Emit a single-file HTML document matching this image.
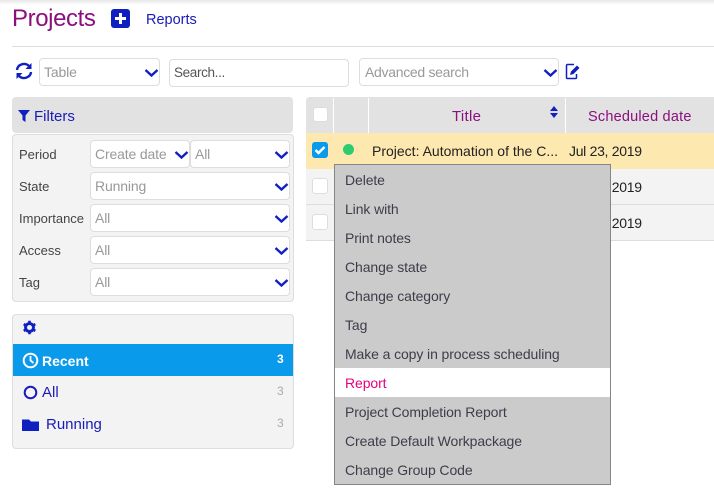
<!DOCTYPE html>
<html><head><meta charset="utf-8"><style>
html,body{margin:0;padding:0;background:#fff;width:714px;height:493px;overflow:hidden}
body{position:relative;font-family:"Liberation Sans",sans-serif;font-size:14px;color:#333}
.a{position:absolute;white-space:nowrap}
.box{position:absolute;box-sizing:border-box;background:#fff;border:1px solid #ddd;border-radius:4px;color:#999;font-size:14px;line-height:26px;padding-left:4px;height:28px;letter-spacing:-.15px}
.box svg{position:absolute;right:0;top:9px}
.lab{position:absolute;left:19px;font-size:13px;color:#444;line-height:20px}
.m{position:absolute;left:0;right:0;height:29px;line-height:29px;padding-left:10px;color:#3d3d4a;font-size:14px;letter-spacing:-.1px}
.cb{position:absolute;box-sizing:border-box;left:312px;width:16px;height:16px;background:#fff;border:1px solid #ddd;border-radius:3px}
</style></head><body>
<div class="a" style="left:0;top:0;width:714px;height:5px;background:linear-gradient(#e8e8e8,#fff)"></div>
<div class="a" style="left:12px;top:3px;font-size:24px;line-height:32px;color:#8b0f7f;letter-spacing:-.4px">Projects</div>
<div class="a" style="left:111px;top:9px;width:19px;height:19px;background:#1020c0;border-radius:3px"></div>
<div class="a" style="left:115px;top:17px;width:11px;height:3px;background:#fff"></div>
<div class="a" style="left:119px;top:13px;width:3px;height:11px;background:#fff"></div>
<div class="a" style="left:146px;top:10px;font-size:14.5px;line-height:20px;color:#1a1ab8">Reports</div>
<div class="a" style="left:12px;top:46px;width:702px;height:1px;background:#ddd"></div>

<svg class="a" style="left:15px;top:62px" width="18" height="18" viewBox="0 0 18 18" fill="none" stroke="#1020c0" stroke-width="2.4"><path d="M2 8A7 6.5 0 0 1 14 4"/><path d="M16 10A7 6.5 0 0 1 4 14"/><path d="M16.500 1v6h-6z" fill="#1020c0" stroke="none"/><path d="M1.500 17v-6h6z" fill="#1020c0" stroke="none"/></svg>
<div class="box" style="left:39px;top:58px;width:121px">Table<svg width="15" height="9" viewBox="0 0 15 9"><path d="M1.500 2l6 5.500 6-5.500" fill="none" stroke="#1020c0" stroke-width="2.400"/></svg></div>
<div class="box" style="left:169px;top:59px;width:180px;color:#555;font-size:13.500px;letter-spacing:-.35px">Search...</div>
<div class="box" style="left:359px;top:58px;width:200px;padding-left:5px;letter-spacing:-.3px">Advanced search<svg width="15" height="9" viewBox="0 0 15 9"><path d="M1.500 2l6 5.500 6-5.500" fill="none" stroke="#1020c0" stroke-width="2.400"/></svg></div>
<svg class="a" style="left:565px;top:63px" width="16" height="17" viewBox="0 0 16 17" fill="none"><path d="M9 1.500H2.500a1 1 0 0 0-1 1v12a1 1 0 0 0 1 1h8a1 1 0 0 0 1-1V11" stroke="#1020c0" stroke-width="1.500"/><path d="M5 12l1-3.500L12 2.500l2.500 2.500-6 6z" fill="#1020c0"/></svg>

<div class="a" style="left:12px;top:97px;width:281px;height:36px;background:#e2e2e2;border-radius:4px"></div>
<svg class="a" style="left:18px;top:110px" width="12" height="12" viewBox="0 0 12 12"><path d="M0 0h12L7.500 5.500V12L4.500 10V5.500z" fill="#1020c0"/></svg>
<div class="a" style="left:34px;top:107px;font-size:15px;line-height:20px;color:#1a1ab8">Filters</div>

<div class="a" style="left:12px;top:134px;width:282px;height:168px;box-sizing:border-box;background:#f3f3f3;border:1px solid #ddd;border-radius:4px"></div>
<div class="lab" style="top:145px">Period</div>
<div class="box" style="left:90px;top:140px;width:100px">Create date<svg width="15" height="9" viewBox="0 0 15 9"><path d="M1.500 2l6 5.500 6-5.500" fill="none" stroke="#1020c0" stroke-width="2.400"/></svg></div>
<div class="box" style="left:190px;top:140px;width:100px">All<svg width="15" height="9" viewBox="0 0 15 9"><path d="M1.500 2l6 5.500 6-5.500" fill="none" stroke="#1020c0" stroke-width="2.400"/></svg></div>
<div class="lab" style="top:177px">State</div>
<div class="box" style="left:90px;top:172px;width:200px">Running<svg width="15" height="9" viewBox="0 0 15 9"><path d="M1.500 2l6 5.500 6-5.500" fill="none" stroke="#1020c0" stroke-width="2.400"/></svg></div>
<div class="lab" style="top:209px">Importance</div>
<div class="box" style="left:90px;top:204px;width:200px">All<svg width="15" height="9" viewBox="0 0 15 9"><path d="M1.500 2l6 5.500 6-5.500" fill="none" stroke="#1020c0" stroke-width="2.400"/></svg></div>
<div class="lab" style="top:241px">Access</div>
<div class="box" style="left:90px;top:236px;width:200px">All<svg width="15" height="9" viewBox="0 0 15 9"><path d="M1.500 2l6 5.500 6-5.500" fill="none" stroke="#1020c0" stroke-width="2.400"/></svg></div>
<div class="lab" style="top:273px">Tag</div>
<div class="box" style="left:90px;top:268px;width:200px">All<svg width="15" height="9" viewBox="0 0 15 9"><path d="M1.500 2l6 5.500 6-5.500" fill="none" stroke="#1020c0" stroke-width="2.400"/></svg></div>

<div class="a" style="left:12px;top:314px;width:282px;height:135px;box-sizing:border-box;background:#f3f3f3;border:1px solid #ddd;border-radius:4px"></div>
<svg class="a" style="left:22px;top:320px" width="15" height="15" viewBox="0 0 15 15"><path d="M7.500 .8v13.400M1.700 4.150l11.600 6.700M1.700 10.850l11.600-6.700" stroke="#1020c0" stroke-width="2.600"/><circle cx="7.500" cy="7.500" r="4.100" fill="none" stroke="#1020c0" stroke-width="2.600"/><circle cx="7.500" cy="7.500" r="2.500" fill="#f3f3f3"/></svg>
<div class="a" style="left:13px;top:344px;width:280px;height:32px;background:#0a9aec"></div>
<svg class="a" style="left:22px;top:352px" width="17" height="17" viewBox="0 0 17 17" fill="none" stroke="#fff"><circle cx="8.500" cy="8.500" r="6.800" stroke-width="2"/><path d="M8.500 4v4.500l3 2.500" stroke-width="1.800"/></svg>
<div class="a" style="left:42px;top:351px;font-size:14px;font-weight:bold;line-height:20px;color:#fff">Recent</div>
<div class="a" style="left:277px;top:351px;font-size:12px;font-weight:bold;line-height:16px;color:#fff">3</div>
<svg class="a" style="left:23px;top:385px" width="15" height="15" viewBox="0 0 15 15" fill="none"><circle cx="7.500" cy="7.500" r="5.800" stroke="#1a1ab8" stroke-width="2"/></svg>
<div class="a" style="left:42px;top:383px;font-size:15px;line-height:20px;color:#1a1ab8">All</div>
<div class="a" style="left:277px;top:383px;font-size:12px;line-height:16px;color:#aaa">3</div>
<svg class="a" style="left:22px;top:418px" width="17" height="13" viewBox="0 0 17 13"><path d="M0 1.500h7l2 2h8V13H0z" fill="#1020c0"/></svg>
<div class="a" style="left:46px;top:415px;font-size:15px;line-height:20px;color:#1a1ab8">Running</div>
<div class="a" style="left:277px;top:415px;font-size:12px;line-height:16px;color:#aaa">3</div>

<div class="a" style="left:306px;top:97px;width:408px;height:36px;background:#e2e2e2;border-radius:4px 0 0 0"></div>
<div class="a" style="left:333px;top:98px;width:1px;height:35px;background:#fff"></div>
<div class="a" style="left:368px;top:98px;width:1px;height:35px;background:#fff"></div>
<div class="a" style="left:565px;top:98px;width:1px;height:35px;background:#fff"></div>
<div class="cb" style="top:107px;left:313px;width:15px;height:15px"></div>
<div class="a" style="left:452px;top:107px;font-size:15px;line-height:20px;color:#8b0f7f;letter-spacing:.3px">Title</div>
<svg class="a" style="left:549px;top:105px" width="10" height="14" viewBox="0 0 10 14"><path d="M5 1l4 5H1zM1 8h8l-4 5z" fill="#1020c0"/></svg>
<div class="a" style="left:588px;top:107px;font-size:14.500px;line-height:20px;color:#8b0f7f;letter-spacing:.2px">Scheduled date</div>

<div class="a" style="left:306px;top:133px;width:408px;height:36px;background:#fde8b0"></div>
<div class="a" style="left:306px;top:169px;width:408px;height:35px;background:#f3f3f3;border-bottom:1px solid #ddd"></div>
<div class="a" style="left:306px;top:205px;width:408px;height:35px;background:#f3f3f3;border-bottom:1px solid #ddd"></div>
<div class="a" style="left:312px;top:142px;width:16px;height:16px;background:#0a9aec;border-radius:3px"></div>
<svg class="a" style="left:312px;top:142px" width="16" height="16" viewBox="0 0 16 16"><path d="M3.500 8l3 3 6-6" fill="none" stroke="#fff" stroke-width="2.400"/></svg>
<div class="a" style="left:343px;top:144px;width:11px;height:11px;border-radius:50%;background:#2ecc71"></div>
<div class="a" style="left:372px;top:141px;font-size:14px;line-height:20px;color:#222">Project: Automation of the C...</div>
<div class="a" style="left:569px;top:141px;font-size:14px;line-height:20px;color:#222;letter-spacing:-.3px">Jul 23, 2019</div>
<div class="a" style="left:569px;top:177px;font-size:14px;line-height:20px;color:#222;letter-spacing:-.3px">Jul 23, 2019</div>
<div class="a" style="left:569px;top:213px;font-size:14px;line-height:20px;color:#222;letter-spacing:-.3px">Jul 23, 2019</div>
<div class="cb" style="top:178px"></div>
<div class="cb" style="top:214px"></div>

<div class="a" style="left:334px;top:164px;width:277px;height:321px;box-sizing:border-box;background:#cbcbcb;border:1px solid #858585">
<div class="m" style="top:1px">Delete</div>
<div class="m" style="top:30px">Link with</div>
<div class="m" style="top:59px">Print notes</div>
<div class="m" style="top:88px">Change state</div>
<div class="m" style="top:117px">Change category</div>
<div class="m" style="top:146px">Tag</div>
<div class="m" style="top:175px">Make a copy in process scheduling</div>
<div class="m" style="top:203px;line-height:31px;background:#fff;color:#e6007e">Report</div>
<div class="m" style="top:233px">Project Completion Report</div>
<div class="m" style="top:262px">Create Default Workpackage</div>
<div class="m" style="top:291px">Change Group Code</div>
</div>
</body></html>
